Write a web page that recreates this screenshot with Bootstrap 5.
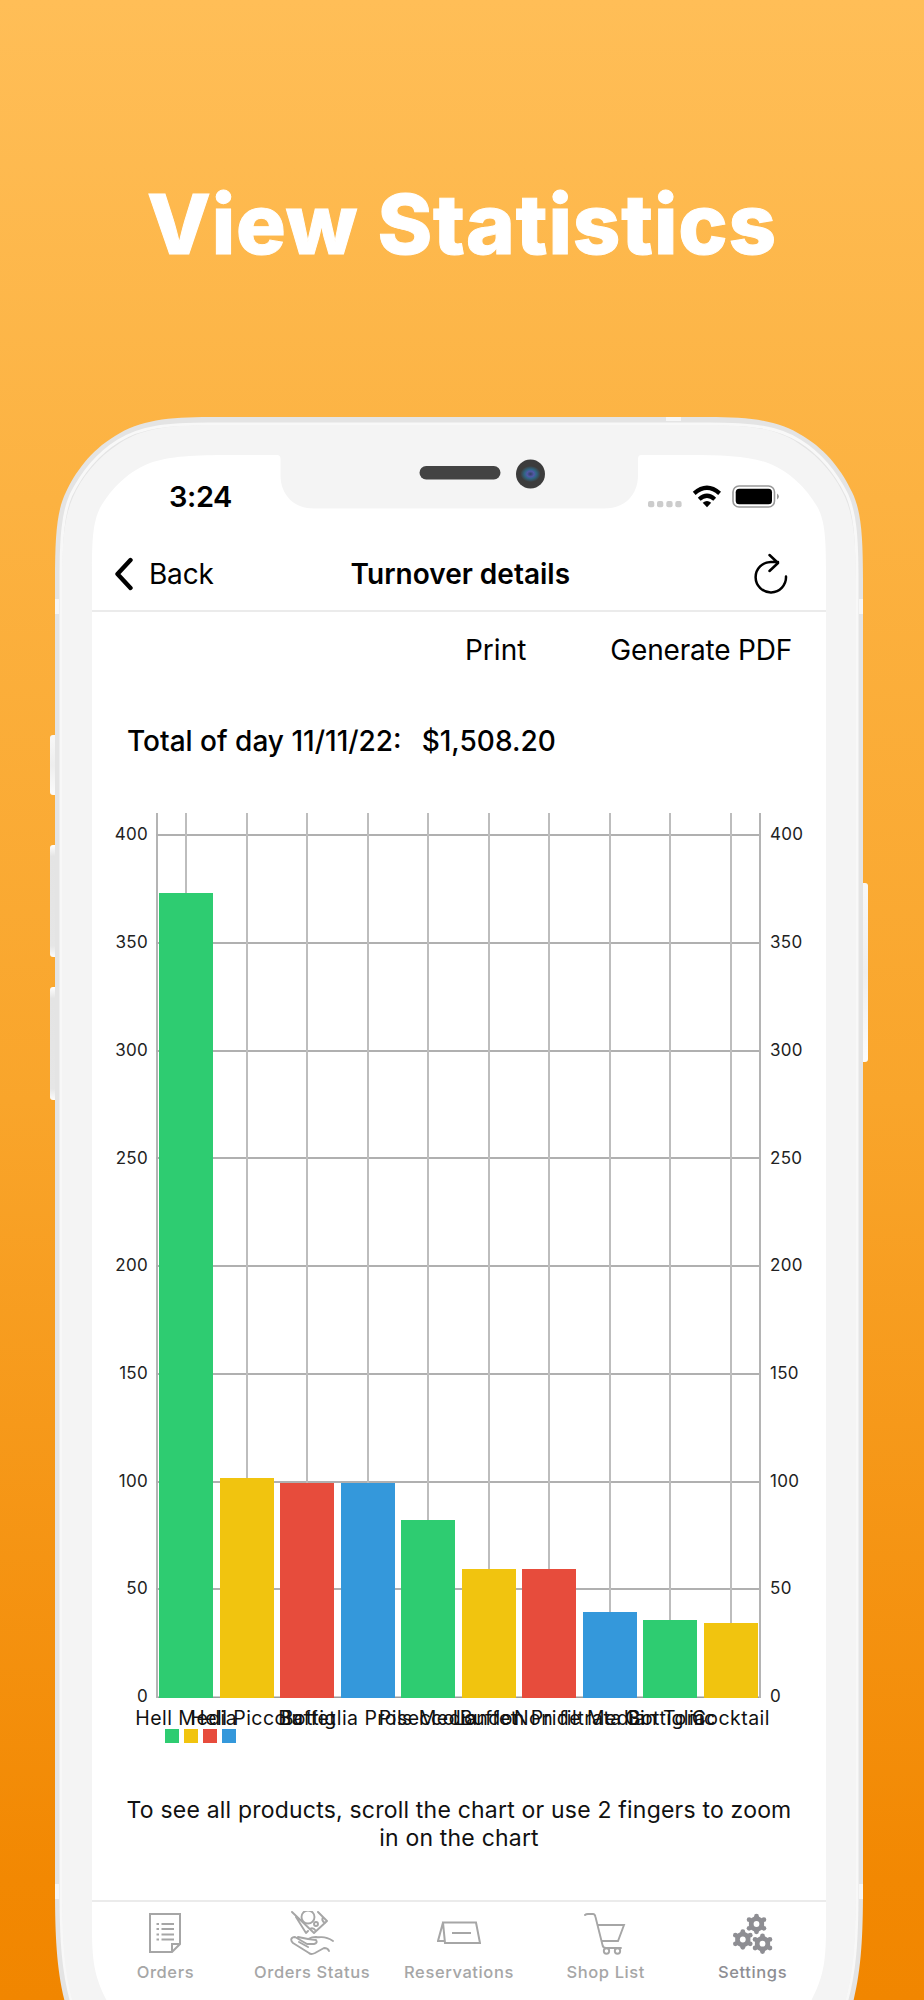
<!DOCTYPE html>
<html lang="en">
<head>
<meta charset="utf-8">
<meta name="viewport" content="width=device-width, initial-scale=1">
<title>View Statistics</title>
<link rel="stylesheet" href="https://cdn.jsdelivr.net/npm/bootstrap@5.3.0/dist/css/bootstrap.min.css">
<style>
body{margin:0;font-family:Inter,"Liberation Sans",sans-serif;color:#000}
.stage{width:924px;height:2000px;background:linear-gradient(#ffbe57 0%,#fcb241 25%,#f9a52b 55%,#f28802 94%,#f18600 100%)}
.headline{height:417px;padding-top:174px;font-size:83px;line-height:100px;font-weight:800;color:#fff;text-align:center;white-space:nowrap}
.headline span{display:inline-block;letter-spacing:.9px;-webkit-text-stroke:1px #fff}
.frame{position:absolute;inset:0;pointer-events:none}
.screen{width:734px;height:1545px;margin:38px 0 0 92px;z-index:1}
.statusbar{height:85px}
.clock{font-size:29px;font-weight:600;line-height:36px;padding:24px 0 0 77px;letter-spacing:-.4px}
.navrow{height:72px;border-bottom:2px solid #ebebeb;font-size:28px;line-height:36px;padding-bottom:2px}
.chevron{margin-left:23px}
.back{margin-left:16px;letter-spacing:-.2px}
.title{margin-left:137px}
.reload{margin:-3px 38px 0 0}
.actions{height:75px;font-size:28px;margin-bottom:1px}
.print{margin-right:84px}
.pdf{margin-right:34px;letter-spacing:-.2px}
.total{font-size:28px;line-height:36px;font-weight:500;padding:35px 0 0 35px;height:125px;white-space:nowrap}
.sum{margin-left:20px}
.plot-area{display:grid;grid-template-columns:64px 605px 65px;height:885px}
.axis{font-size:17px;line-height:20px;color:#222}
.axis span{position:absolute;transform:translateY(-50%);letter-spacing:.3px}
.axis.lft span{right:8px}.axis.rgt span{left:9px}
.plot{box-shadow:inset 0 -1.500px #9b9b9b}
.plot::before,.plot::after{content:"";position:absolute;top:0;bottom:0;width:2px;background:#b4b4b4}
.plot::before{left:0}.plot::after{right:0}
.gl{position:absolute;left:0;right:0;height:2px;background:#b0b0b0}
.slot{flex:1 1 0}
.slot::before{content:"";position:absolute;left:50%;top:0;bottom:0;width:2px;margin-left:-1px;background:#bdbdbd}
.bar{width:90%;z-index:1}
.g{background:#2ecc71}.y{background:#f1c40f}.r{background:#e74c3c}.b{background:#3498db}
.xl{position:absolute;top:100%;left:50%;transform:translateX(-50%);white-space:nowrap;font-size:19.500px;letter-spacing:.45px;line-height:24px;margin-top:8px;color:#111;z-index:2}
.legend{margin:31px 0 0 73px;gap:5px}
.legend i{display:block;width:14px;height:14px}
.hint{margin-top:53px;white-space:nowrap;font-size:23px;letter-spacing:.2px;line-height:28px;color:#111}
.tabs{height:100px;border-top:2px solid #ebebeb;color:#a6a6a6;font-size:16.500px;font-weight:500}
.tabs svg{display:block;margin:9px auto 0}
.tabs .active{color:#8e8e93}
.tabs span{display:block;line-height:20px;margin-top:7px;letter-spacing:.6px;white-space:nowrap}
</style>
</head>
<body>
<main class="stage position-relative overflow-hidden">
<svg class="frame" width="924" height="2000" viewBox="0 0 924 2000" aria-hidden="true">
 <defs>
  <linearGradient id="key" x1="0" y1="0" x2="0" y2="1"><stop offset="0" stop-color="#fff"/><stop offset=".1" stop-color="#e4e4e4"/><stop offset=".9" stop-color="#e6e6e6"/><stop offset="1" stop-color="#fcfcfc"/></linearGradient>
  <linearGradient id="key2" x1="0" y1="0" x2="0" y2="1"><stop offset="0" stop-color="#f8f8f8"/><stop offset=".5" stop-color="#eee"/><stop offset="1" stop-color="#fcfcfc"/></linearGradient>
  <radialGradient id="lens"><stop offset="0" stop-color="#304060"/><stop offset=".35" stop-color="#5358a8"/><stop offset=".6" stop-color="#2f6684"/><stop offset="1" stop-color="#3d3d3d"/></radialGradient>
 </defs>
 <rect x="50" y="735" width="9" height="60" rx="3" fill="url(#key2)"/>
 <rect x="50" y="845" width="9" height="112" rx="3" fill="url(#key)"/>
 <rect x="50" y="987" width="9" height="113" rx="3" fill="url(#key)"/>
 <rect x="859" y="883" width="9" height="179" rx="3" fill="url(#key2)"/>
 <path fill="#e4e4e4" d="M55 580C55 535 57 510 66 492C75 473 90 451 115 436C140 420 168 417 210 417H708C750 417 778 420 803 436C828 451 843 473 852 492C861 510 863 535 863 580V1890C863 1940 861 1975 851 2010H67C57 1975 55 1940 55 1890Z"/>
 <path fill="none" stroke="#f8f8f8" stroke-width="3" d="M61 580C61 537 63 513 71 495C80 477 94 456 118 441C142 426 169 424 210 424H708C749 424 776 426 800 441C824 456 838 477 847 495C855 513 857 537 857 580V1890C857 1940 855 1975 844 2010H74C63 1975 61 1940 61 1890Z"/>
 <path fill="#f4f4f4" d="M62 580C62 539 65 515 73 497C81 479 96 458 120 443C143 428 170 425 210 425H708C748 425 775 428 798 443C822 458 837 479 845 497C853 515 856 539 856 580V1890C856 1940 854 1975 843 2010H75C64 1975 62 1940 62 1890Z"/>
 <path fill="#f6f6f6" d="M55 599h4v15h-4zM859 599h4v15h-4zM666 417h15v4h-15zM55 1884h4v15h-4zM859 1884h4v15h-4z"/>
 <path fill="#fff" d="M92 570C92 540 93 522 100 508C108 494 124 473 150 463C170 456 195 455 230 455H277Q280.500 455 280.500 459V475C280.500 496 295 508.500 314 508.500H604C624 508.500 638 496 638 475V459Q638 455 641 455H688C723 455 748 456 768 463C794 473 810 494 818 508C825 522 826 540 826 570V1930C826 1965 822 1980 811 2001H107C96 1980 92 1965 92 1930Z"/>
 <rect x="419.500" y="466" width="81" height="13.500" rx="6.700" fill="#434343"/>
 <circle cx="530.500" cy="474" r="14.500" fill="#3c3c3c"/><ellipse cx="530.500" cy="474" rx="10" ry="8" fill="url(#lens)"/>
</svg>
<h1 class="headline mb-0"><span>View Statistics</span></h1>
<section class="screen position-relative d-flex flex-column">
 <div class="statusbar d-flex justify-content-between flex-shrink-0">
  <div class="clock">3:24</div>
  <svg width="180" height="85" viewBox="646 455 180 85">
   <g fill="#ccc"><rect x="648" y="501" width="6.300" height="6.300" rx="2"/><rect x="657" y="501" width="6.300" height="6.300" rx="2"/><rect x="666.300" y="501" width="6.300" height="6.300" rx="2"/><rect x="675.300" y="501" width="6.300" height="6.300" rx="2"/></g>
   <g fill="none" stroke="#000" stroke-width="4.200"><path d="M694.200 493.400Q707 482 719.600 493.400"/><path d="M699.200 499.200Q707 492.300 714.700 499.200"/></g><path d="M702.700 502.800Q707 499.400 711.200 502.800L707 507.200Z"/>
   <rect x="733" y="486" width="41.500" height="21" rx="6" fill="none" stroke="#999" stroke-width="1.600"/><rect x="735.700" y="488.700" width="36.300" height="15.600" rx="3.500"/><path d="M777 493.500q4 3 0 6z" fill="#999"/>
  </svg>
 </div>
 <nav class="navrow d-flex align-items-center flex-shrink-0">
  <svg class="chevron flex-shrink-0" width="18" height="34" viewBox="0 0 18 34" fill="none" stroke="#000" stroke-width="4.400" stroke-linecap="round" stroke-linejoin="round"><path d="M15.500 3L2.500 17L15.500 31"/></svg>
  <span class="back">Back</span>
  <span class="fw-semibold title">Turnover details</span>
  <svg class="ms-auto reload" width="34" height="42" viewBox="0 0 34 42" fill="none" stroke="#000" stroke-width="2.500" stroke-linecap="round" stroke-linejoin="round"><path d="M32 24.500A15.200 15.200 0 1 1 17 10H24M15.500 3L24 11L15.500 19"/></svg>
 </nav>
 <div class="actions d-flex justify-content-end align-items-center flex-shrink-0"><span class="print">Print</span><span class="pdf">Generate PDF</span></div>
 <div class="total flex-shrink-0">Total of day 11/11/22:<span class="sum">$1,508.20</span></div>
 <div class="plot-area flex-shrink-0">
  <div class="axis lft position-relative" id="axl"></div>
  <div class="plot position-relative d-flex" id="plot"></div>
  <div class="axis rgt position-relative" id="axr"></div>
 </div>
 <div class="legend d-flex"><i class="g"></i><i class="y"></i><i class="r"></i><i class="b"></i></div>
 <p class="hint text-center mb-0">To see all products, scroll the chart or use 2 fingers to zoom<br>in on the chart</p>
 <div class="tabs row g-0 mt-auto text-center flex-shrink-0">
  <div class="col"><svg width="44" height="44" viewBox="0 0 44 44" fill="none" stroke="currentColor" stroke-width="2"><path d="M7 3H37V33L29 41H7ZM29 41V33H37M18.500 13H31M18.500 18H31M18.500 23.500H31M18.500 28.500H31M13.500 13h2.500M13.500 18h2.500M13.500 23.500h2.500M13.500 28.500h2.500"/></svg><span>Orders</span></div>
  <div class="col"><svg width="44" height="44" viewBox="0 0 44 44" fill="none" stroke="currentColor" stroke-width="1.900" stroke-linejoin="round" stroke-linecap="round"><path d="M2 1L24 22L37 10L28 1M6 6L16 22L18 20M33 6Q31 10 35 12M20 18Q23 16 26 20"/><circle cx="18" cy="6" r="6.500"/><circle cx="26" cy="13" r="2"/><path d="M43 30C34 24 32 27 26 26Q22 26 18 28L26 29Q28 32 24 33H17M18 28L8 26M17 33L5 26C1 26 0 29 3 32L19 42Q21 44 25 42L34 37Q38 37 39 40M9 31L18 36"/></svg><span>Orders Status</span></div>
  <div class="col"><svg width="44" height="44" viewBox="0 0 44 44" fill="none" stroke="currentColor" stroke-width="2"><path d="M6 11.500H39L43 32H8ZM6 11.500L1 30H7.500M15 22H34"/></svg><span>Reservations</span></div>
  <div class="col"><svg width="44" height="44" viewBox="0 0 44 44" fill="none" stroke="currentColor" stroke-width="1.900" stroke-linecap="round"><path d="M1 4Q2 3 4 3H9Q11 3 11.500 6L18.500 34Q19 37 22 37H37M13.500 14H40L34 30H18"/><circle cx="22.500" cy="40" r="2.700"/><circle cx="33.500" cy="40" r="2.700"/></svg><span>Shop List</span></div>
  <div class="col active"><svg width="44" height="44" viewBox="0 0 44 44"><defs><g id="gear"><path fill="currentColor" d="M0-8.800L7.600-4.400V4.400L0 8.800L-7.600 4.400V-4.400Z"/><g fill="currentColor"><circle cy="-7.800" r="2.400"/><circle cy="7.800" r="2.400"/><circle cx="7.400" cy="-4.300" r="2.400"/><circle cx="7.400" cy="4.300" r="2.400"/><circle cx="-7.400" cy="-4.300" r="2.400"/><circle cx="-7.400" cy="4.300" r="2.400"/></g><circle r="2.900" fill="#fff"/></g></defs><use href="#gear" x="25.500" y="13"/><use href="#gear" x="11.800" y="28.500"/><use href="#gear" x="31.500" y="32.700"/></svg><span>Settings</span></div>
 </div>
</section>
</main>
<script src="https://cdn.jsdelivr.net/npm/bootstrap@5.3.0/dist/js/bootstrap.bundle.min.js"></script>
<script>
const items=[["Hell Media",373.4],["Hell Piccola",102],["Buffet",100],["Bottiglia Prosecco",100],["Pils Media",82.4],["Buffet",60],["London Pride Media",60],["Non filtrata Bottiglia",40],["Gin Tonic",36],["Cocktail",35]];
const colors=["g","y","r","b"],max=410.7,plot=document.getElementById("plot");
let h="",ax="";
for(let v=0;v<=400;v+=50){const p=v/max*100;if(v)h+=`<div class="gl" style="bottom:${p}%"></div>`;ax+=`<span style="top:${100-p-.2}%">${v}</span>`}
items.forEach(([n,v],i)=>{h+=`<div class="slot position-relative d-flex align-items-end justify-content-center"><div class="bar ${colors[i%4]}" style="height:${v/max*100}%"></div><span class="xl">${n}</span></div>`});
plot.innerHTML=h;
document.getElementById("axl").innerHTML=ax;
document.getElementById("axr").innerHTML=ax;
</script>
</body>
</html>
